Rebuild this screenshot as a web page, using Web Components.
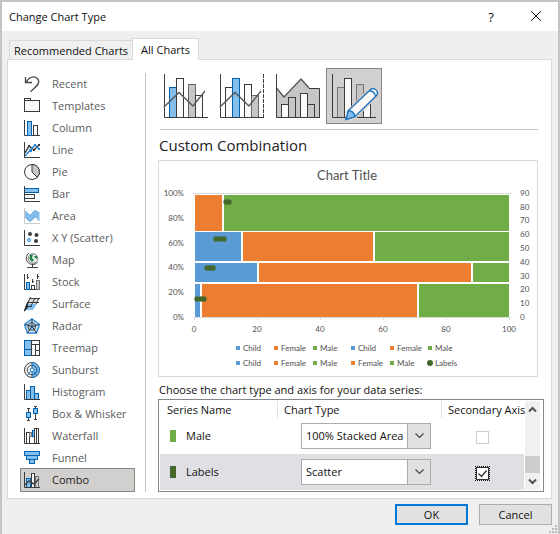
<!DOCTYPE html>
<html lang="en">
<head>
<meta charset="utf-8">
<title>Change Chart Type</title>
<style>
  body {
    margin: 0;
    font: 11px/16px "Open Sans", "Noto Sans", sans-serif;
    color: #111;
    background: #efefef;
  }
</style>
</head>
<body>
<chart-dialog heading="Change Chart Type">
  <dialog-tabs slot="tabs"></dialog-tabs>
  <chart-types slot="side"></chart-types>
  <combo-picker slot="main"></combo-picker>
  <h2 slot="main">Custom Combination</h2>
  <combo-preview slot="main"></combo-preview>
  <series-table slot="main"></series-table>
  <dialog-button slot="footer" primary>OK</dialog-button>
  <dialog-button slot="footer">Cancel</dialog-button>
</chart-dialog>

<script>
const Colors = {
  ink: '#3b3b3b',
  gray: '#c8c6c4',
  blue: '#83beec',
  blueDark: '#0063b1',
  child: '#5b9bd5',
  female: '#ed7d31',
  male: '#70ad47',
  labels: '#43682b',
};

const define = (name, html, setup) => {
  const template = document.createElement('template');
  template.innerHTML = html;
  customElements.define(name, class extends HTMLElement {
    constructor() {
      super();
      this.attachShadow({ mode: 'open' }).appendChild(template.content.cloneNode(true));
    }
    connectedCallback() {
      if (setup) setup(this, this.shadowRoot);
    }
  });
};

const bar = (x, y, w, h, fill = '#fafafa', stroke = Colors.ink) =>
  `<rect x="${x}" y="${y}" width="${w}" height="${h}" fill="${fill}" stroke="${stroke}"/>`;
const line = (d, stroke = Colors.ink, width = 1) =>
  `<path d="${d}" fill="none" stroke="${stroke}" stroke-width="${width}"/>`;
const blueBar = (x, y, w, h) => bar(x, y, w, h, Colors.blue, Colors.blueDark);
const axis = line('M.5 0V15.5H16');

// 16x16 icons of the category list
const typeIcons = {
  Recent: line('M1.5 1V6.5H8M2 6.5C4 2.5 6.5.8 9.5.8C12.5.8 14.7 3 14.7 5.5C14.7 8 13 10 11 11.5L6.5 15.7', '#444', 1.3),
  Templates: bar(.5, 2.5, 15, 11) + bar(.5, .5, 6, 2),
  Column: axis + blueBar(3.5, 1.5, 4, 14) + bar(9.5, 5.5, 4, 10),
  Line: line('M1 11L5 4L10 8L15 3', Colors.ink, 1.5) +
    line('M1 14L11 3L15 7', '#2b88d8', 1.5) + axis +
    `<path d="M4 3h2v2H4zM9 7h2v2H9zM14 2h2v2h-2z" fill="${Colors.ink}"/>` +
    '<path d="M10 2h2v2h-2zM14 6h2v2h-2zM5 7h3v3H5z" fill="#2b88d8"/>',
  Pie: `<circle cx="8" cy="8" r="7.5" fill="#fafafa" stroke="${Colors.ink}"/>
    <path d="M8 .5A7.5 7.5 0 0 1 13.3 13.3L8 8Z" fill="${Colors.gray}" stroke="${Colors.ink}"/>`,
  Bar: blueBar(.5, 2.5, 14, 4) + bar(.5, 8.5, 10, 4) + axis,
  Area: line('M.5 0V15.5H16', '#c8c8c8') +
    `<path d="M1 3L6 7L11 2L15.5 5V13L12 9L6 14L1 9Z" fill="${Colors.blue}"/>` +
    line('M1 3L6 7.5L11 2.5L15.5 5', '#69a8dc') + line('M1 9L6 13.5L11 8.5L15.5 13', '#69a8dc'),
  'X Y (Scatter)': axis + `<g fill="${Colors.ink}"><circle cx="6" cy="4" r="2"/><circle cx="12.5" cy="5" r="2"/><circle cx="12" cy="11" r="2"/></g>
    <circle cx="5" cy="10" r="1.5" fill="#cfe6f8" stroke="#2b88d8"/>`,
  Map: `<circle cx="9" cy="6.5" r="4.8" fill="#e9f2ec" stroke="#777"/>
    <path d="M6 3L9 2.5L8 6L10 8L8 10L5.5 7ZM10 4L13 4L13 7L11 6Z" fill="#20844a"/>` +
    line('M5 1C1.5 3 1.5 9 4.5 11C7 13 11 13 13.5 10.5M8.5 12V15M3 15.5H14', '#444'),
  Stock: line('M.5 0V15.5H16M3.5 0V5M3.5 3.5H5M8.5 5V9M8.5 7.5H10M13.5 0V5M13.5 2.5H15') +
    blueBar(2.5, 8.5, 3, 7) + bar(7.5, 11.5, 3, 4) + bar(12.5, 6.5, 3, 9, Colors.gray, '#777'),
  Surface: `<path d="M3 8L13 8L9 14H1Z" fill="${Colors.blue}"/><path d="M5 3H15L12 8H3Z" fill="#ddd"/>` +
    line('M5.5 2.5H16M3.5 6.5H15M2 10.5H8M6.5 1L1 13M11 2L6.5 11M15 2L12 8') +
    line('M0 15L4 10M4 6L2 11', '#222', 1.5),
  Radar: `<path d="M8 1L15.5 6.5L12.5 15H3.5L.5 6.5Z" fill="#d9ebf9" stroke="#2b88d8" stroke-width="1.5"/>
    <path d="M8 4L12 7L10.5 12H5L3.5 7Z" fill="#a8d0ef" stroke="#34495c"/>` +
    line('M8 1V8.5M15 6.5L8 8.5L12.5 15M3.5 15L8 8.5L1 6.5', '#333'),
  Treemap: blueBar(.5, .5, 7, 9) + blueBar(.5, 9.5, 7, 6) + bar(7.5, .5, 8, 4) + bar(7.5, 4.5, 4, 11) + bar(11.5, 4.5, 4, 6) + bar(11.5, 10.5, 4, 5),
  Sunburst: `<circle cx="8" cy="8" r="7.5" fill="#fafafa" stroke="${Colors.ink}"/>
    <path d="M8 .5A7.5 7.5 0 0 1 8 15.5Z" fill="${Colors.blue}" stroke="#1d6fb5"/>
    <circle cx="8" cy="8" r="4.8" fill="none" stroke="#444"/>
    <path d="M8 3.2A4.8 4.8 0 0 1 8 12.8M3 14L6 10M13 14L10 10" fill="none" stroke="#1d6fb5"/>
    <circle cx="8" cy="8" r="2" fill="#fff" stroke="#1d6fb5"/>`,
  Histogram: blueBar(2.5, 6.5, 4, 9) + blueBar(6.5, 2.5, 4, 13) + blueBar(10.5, 9.5, 4, 6) + axis,
  'Box & Whisker': line('M4.5 2V15M11.5 1V14M3 2.5H6M3 14.5H6M10 .5H13M10 13.5H13') +
    blueBar(2.5, 6.5, 4, 5) + blueBar(9.5, 2.5, 4, 5),
  Waterfall: axis + bar(2.5, 4.5, 3, 11) + bar(5.5, 4.5, 2, 4, Colors.gray, '#777') +
    blueBar(8.5, 2.5, 2, 6) + bar(10.5, .5, 2, 15) + bar(12.5, .5, 2, 15),
  Funnel: blueBar(.5, 1.5, 15, 4) + blueBar(2.5, 5.5, 11, 4) + blueBar(5.5, 9.5, 5, 4),
  Combo: bar(7.5, 1.5, 3, 14) + blueBar(2.5, 6.5, 4, 9) + bar(11.5, 4.5, 3, 11, Colors.gray, '#777') +
    axis + line('M1 13L5 9L10 12L15 7', '#444', 1.5),
};

// 56x56 pictures of the combo subtypes
const trend = line('M6 39L21 24.5L35 38L47 23', '#555', 1.3);
const bigAxis = line('M6.5 6V49.5H50');
const comboIcons = {
  'Clustered Column - Line': blueBar(11.5, 19.5, 7, 30) + bar(18.5, 10.5, 7, 39) +
    bar(30.5, 16.5, 7, 33, Colors.gray, '#666') + bar(37.5, 27.5, 7, 22) + bigAxis + trend,
  'Clustered Column - Line on Secondary Axis': bar(11.5, 19.5, 7, 30) + blueBar(18.5, 10.5, 7, 39) +
    bar(30.5, 16.5, 7, 33) + bar(37.5, 27.5, 7, 22, Colors.gray, '#666') + bigAxis + trend +
    `<path d="M49.5 6V49" stroke="${Colors.ink}" stroke-dasharray="4 1"/>`,
  'Stacked Area - Clustered Column': `<path d="M6.5 20L14 29L31 11L39 20H49.5V49.5H6.5Z" fill="${Colors.gray}"/>` +
    line('M6.5 20L14 29L31 11L39 20', '#555', 1.3) + line('M39 20.5H49.5V49.5') +
    bar(11.5, 36.5, 7, 13) + bar(18.5, 29.5, 7, 20, Colors.gray) +
    bar(30.5, 25.5, 7, 24) + bar(37.5, 36.5, 7, 13, Colors.gray) + bigAxis,
  'Custom Combination': bar(11.5, 19.5, 7, 30, '#c4c3c1', '#777') + bar(18.5, 10.5, 7, 39) +
    bar(30.5, 16.5, 7, 33, '#c4c3c1', '#777') + bar(37.5, 27.5, 7, 22) + bigAxis +
    `<path d="M23 44L45 22L50 27L28 49Z" fill="#d2d0ce" stroke="#d2d0ce" stroke-width="5"/>
    <path d="M20 51.5L22.5 42.5L44.5 21.5C48 18.5 53.5 23.5 50.5 27.5L29 48.5Z" fill="#fafafa" stroke="#1e73bd" stroke-width="1.3"/>
    <path d="M20 51.5L22.5 42.5C26 43 28.5 45.5 29 48.5Z" fill="${Colors.blue}" stroke="#1e73bd" stroke-width="1.3"/>
    <path d="M43.5 22.5C46.5 23 49 25.5 49.5 28.5" fill="none" stroke="#1e73bd" stroke-width="1.3"/>`,
};

define('chart-dialog', `
  <style>
    :host {
      display: flex;
      flex-direction: column;
      box-sizing: border-box;
      min-height: 100vh;
      border: 2px solid #c3c3c3;
      background: #efefef;
    }
    header {
      display: flex;
      align-items: center;
      height: 29px;
      padding: 0 7px;
      background: #fff;
    }
    h1 {
      flex: 1;
      margin: 0;
      font-size: 11px;
      font-weight: 400;
    }
    header button {
      width: 30px;
      height: 24px;
      padding: 0;
      border: 0;
      background: none;
      font: inherit;
      font-size: 13px;
      color: #111;
    }
    header button:last-child {
      margin-left: 15px;
    }
    nav {
      padding: 7px 5px 0;
    }
    .panel {
      display: flex;
      gap: 12px;
      margin: 0 6px 0 5px;
      padding: 13px 7px 6px 13px;
      border: 1px solid #d9d9d9;
      background: #fff;
    }
    .main {
      flex: 1;
      min-width: 0;
    }
    ::slotted(h2) {
      margin: 5px 0 5px 1px;
      font-size: 15px;
      line-height: 20px;
      font-weight: 400;
      color: #222;
    }
    footer {
      display: flex;
      justify-content: flex-end;
      gap: 11px;
      padding: 5px 6px 0;
    }
    .grip {
      display: block;
      width: 9px;
      margin: auto 0 0 auto;
    }
  </style>
  <header>
    <h1></h1>
    <button aria-label="Help">?</button>
    <button aria-label="Close"><svg width="12" height="12" viewBox="0 0 12 12"><path d="M1 1L11 11M11 1L1 11" stroke="#111"/></svg></button>
  </header>
  <nav><slot name="tabs"></slot></nav>
  <div class="panel">
    <slot name="side"></slot>
    <div class="main"><slot name="main"></slot></div>
  </div>
  <footer><slot name="footer"></slot></footer>
  <svg class="grip" viewBox="0 0 9 9" fill="#b8b8b8"><path d="M6 0h2v2h-2zM3 3h2v2h-2zM6 3h2v2h-2zM0 6h2v2h-2zM3 6h2v2h-2zM6 6h2v2h-2z"/></svg>
`, (host, root) => {
  root.querySelector('h1').textContent = host.getAttribute('heading');
});

define('dialog-tabs', `
  <style>
    :host {
      display: flex;
      align-items: flex-end;
      padding-left: 2px;
    }
    button {
      height: 19px;
      padding: 2px 4px 0;
      border: 1px solid #d9d9d9;
      border-bottom: 0;
      background: #f0f0f0;
      font: inherit;
      color: #111;
    }
    button[aria-selected=true] {
      position: relative;
      height: 22px;
      padding: 0 8px;
      margin: 0 0 -1px -1px;
      background: #fff;
    }
  </style>
  <button role="tab" aria-selected="false">Recommended Charts</button>
  <button role="tab" aria-selected="true">All Charts</button>
`);

define('chart-types', `
  <style>
    :host {
      display: block;
      padding-right: 11px;
      border-right: 1px solid #c6c6c6;
    }
    button {
      display: flex;
      align-items: center;
      gap: 12px;
      width: 113px;
      height: 22px;
      padding: 0 0 0 3px;
      border: 0;
      background: none;
      font: inherit;
      white-space: nowrap;
      color: #5c5c5c;
    }
    button[aria-current] {
      outline: 1px solid #858a80;
      background: #d2d0ce;
      color: #222;
    }
    svg {
      flex: none;
    }
  </style>
`, (host, root) => {
  Object.entries(typeIcons).forEach(([name, icon]) => {
    const button = document.createElement('button');
    button.innerHTML = `<svg width="16" height="16" viewBox="0 0 16 16">${icon}</svg><span></span>`;
    button.querySelector('span').textContent = name;
    if (name === 'Combo') button.setAttribute('aria-current', 'true');
    root.appendChild(button);
  });
});

define('combo-picker', `
  <style>
    :host {
      display: flex;
      margin: -5px 6px 0 2px;
      padding-bottom: 5px;
      border-bottom: 1px solid #c6c6c6;
    }
    button {
      width: 56px;
      height: 56px;
      padding: 0;
      border: 0;
      background: none;
    }
    button:first-of-type {
      margin-left: -2px;
    }
    button[aria-pressed=true] {
      box-shadow: inset 0 0 0 1px #8a8886;
      background: #d2d0ce;
    }
    svg {
      display: block;
    }
  </style>
`, (host, root) => {
  Object.entries(comboIcons).forEach(([name, icon]) => {
    const button = document.createElement('button');
    button.setAttribute('aria-label', name);
    button.setAttribute('aria-pressed', name === 'Custom Combination');
    button.innerHTML = `<svg width="56" height="56" viewBox="0 0 56 56">${icon}</svg>`;
    root.appendChild(button);
  });
});

const rows = [
  { y: 34, h: 36, cells: [['female', 36, 63], ['male', 65, 350]], dots: [67, 70], dotY: 41 },
  { y: 71, h: 29, cells: [['child', 36, 82], ['female', 84, 214], ['male', 216, 350]], dots: [57, 61, 65], dotY: 78 },
  { y: 102, h: 19, cells: [['child', 36, 98], ['female', 100, 312], ['male', 314, 350]], dots: [48, 51, 54], dotY: 107 },
  { y: 123, h: 33, cells: [['child', 36, 41], ['female', 43, 258], ['male', 260, 350]], dots: [38, 42, 45], dotY: 138 },
];
const legend = [
  [['child', 77], ['female', 115], ['male', 154], ['child', 192], ['female', 231], ['male', 269]],
  [['child', 77], ['female', 115], ['male', 154], ['female', 192], ['male', 231], ['labels', 269]],
];

define('combo-preview', `
  <style>
    :host {
      display: block;
      margin-right: 6px;
      border: 1px solid #d9d9d9;
      background: #fff;
    }
    svg {
      display: block;
      width: 100%;
      font: 8px Lato, sans-serif;
    }
  </style>
  <svg viewBox="0 0 378 215" fill="#505050" role="img" aria-label="Combination chart preview"></svg>
`, (host, root) => {
  const text = (x, y, value, anchor = 'start') => `<text x="${x}" y="${y}" text-anchor="${anchor}">${value}</text>`;
  let out = '<text x="188" y="19" text-anchor="middle" font-size="13">Chart Title</text>';
  out += '<path d="M34 32.5H352M34 156.5H352" stroke="#d9d9d9"/>';
  for (let n = 0; n <= 100; n += 20) {
    const x = Math.round(35 + n * 3.15);
    out += text(25, Math.round(156 - n * 1.24) + 3, `${n}%`, 'end') + text(x, 171, n, 'middle');
    out += `<path d="M${x}.5 157v2" stroke="#d9d9d9"/>`;
  }
  for (let n = 0; n <= 90; n += 10) out += text(361, Math.round(156 - n * 1.38) + 3, n);
  rows.forEach(({ y, h, cells, dots, dotY }) => {
    cells.forEach(([kind, from, to]) => {
      out += `<rect x="${from}" y="${y}" width="${to - from}" height="${h}" fill="${Colors[kind]}"/>`;
    });
    dots.forEach((x) => {
      out += `<circle cx="${x}" cy="${dotY}" r="2.7" fill="${Colors.labels}"/>`;
    });
  });
  legend.forEach((items, i) => {
    const y = 187 + i * 15;
    items.forEach(([kind, x]) => {
      const name = kind[0].toUpperCase() + kind.slice(1);
      out += kind === 'labels'
        ? `<circle cx="${x + 2}" cy="${y}" r="3" fill="${Colors.labels}"/>`
        : `<rect x="${x}" y="${y - 2}" width="4" height="4" fill="${Colors[kind]}"/>`;
      out += text(x + 7, y + 3, name);
    });
  });
  root.querySelector('svg').innerHTML = out;
});

define('type-select', `
  <style>
    :host {
      display: flex;
      position: relative;
      width: 130px;
      height: 26px;
    }
    select {
      flex: 1;
      min-width: 0;
      appearance: none;
      margin: 0;
      padding: 0 24px 0 4px;
      border: 1px solid #ababab;
      border-radius: 0;
      background: linear-gradient(#ababab, #ababab) 105px 0 / 1px 100% no-repeat, linear-gradient(90deg, #fff 105px, #e1e1e1 105px);
      font: inherit;
      color: #111;
    }
    svg {
      position: absolute;
      right: 7px;
      top: 10px;
      pointer-events: none;
    }
  </style>
  <select aria-label="Chart Type"><option></option></select>
  <svg width="9" height="6" viewBox="0 0 9 6"><path d="M.5 .5L4.5 4.5L8.5 .5" fill="none" stroke="#444" stroke-width="1.2"/></svg>
`, (host, root) => {
  root.querySelector('option').textContent = host.getAttribute('value');
});

define('series-table', `
  <style>
    :host {
      display: block;
    }
    p {
      margin: 5px 0 1px 1px;
    }
    .list {
      display: flex;
      border: 1px solid #828790;
      padding: 1px;
    }
    table {
      flex: 1;
      width: 100%;
      min-width: 0;
      table-layout: fixed;
      border-collapse: collapse;
    }
    th {
      height: 17px;
      padding: 0 0 0 7px;
      font-weight: 400;
      line-height: 14px;
      text-align: left;
      white-space: nowrap;
    }
    th + th {
      box-shadow: inset 1px 0 #e1e1e1;
    }
    td {
      height: 36px;
      padding: 0;
    }
    tr.selected td {
      background: #e0dfe4;
    }
    .name {
      display: flex;
      align-items: center;
      gap: 10px;
      padding-left: 10px;
    }
    .key {
      width: 6px;
      height: 12px;
    }
    type-select {
      margin-left: 24px;
    }
    td:last-child {
      text-align: center;
    }
    input {
      appearance: none;
      display: inline-block;
      width: 13px;
      height: 13px;
      margin: 0;
      border: 1px solid #ccc;
      background: #fff;
      vertical-align: middle;
    }
    input:checked {
      border-color: #333;
      outline: 1px dotted #111;
      background: #fff url('data:image/svg+xml,<svg xmlns="http://www.w3.org/2000/svg" viewBox="0 0 11 11"><path d="M1.5 5.5L4.5 8.5L9.5 2.5" fill="none" stroke="%23333" stroke-width="1.3"/></svg>');
    }
    .bar {
      display: flex;
      flex: none;
      flex-direction: column;
      width: 15px;
      margin: 0 2px 0 1px;
      background: #f0f0f0;
    }
    .bar button {
      height: 17px;
      padding: 0;
      border: 0;
      background: none;
      line-height: 0;
    }
    .thumb {
      height: 17px;
      margin-top: auto;
      background: #cdcdcd;
    }
  </style>
  <p id="caption">Choose the chart type and axis for your data series:</p>
  <div class="list">
    <table aria-labelledby="caption">
      <colgroup><col style="width: 117px"><col><col style="width: 83px"></colgroup>
      <thead><tr><th>Series Name</th><th>Chart Type</th><th>Secondary Axis</th></tr></thead>
      <tbody>
        <tr>
          <td><span class="name"><i class="key" style="background: #70ad47"></i>Male</span></td>
          <td><type-select value="100% Stacked Area"></type-select></td>
          <td><input type="checkbox" aria-label="Male on secondary axis"></td>
        </tr>
        <tr class="selected">
          <td><span class="name"><i class="key" style="background: #43682b"></i>Labels</span></td>
          <td><type-select value="Scatter"></type-select></td>
          <td><input type="checkbox" aria-label="Labels on secondary axis" checked></td>
        </tr>
      </tbody>
    </table>
    <div class="bar">
      <button aria-label="Scroll up"><svg width="9" height="7" viewBox="0 0 9 7"><path d="M1 5.5L4.5 2L8 5.5" fill="none" stroke="#505050" stroke-width="2"/></svg></button>
      <div class="thumb"></div>
      <button aria-label="Scroll down"><svg width="9" height="7" viewBox="0 0 9 7"><path d="M1 1.5L4.5 5L8 1.5" fill="none" stroke="#505050" stroke-width="2"/></svg></button>
    </div>
  </div>
`);

define('dialog-button', `
  <style>
    :host {
      display: block;
    }
    button {
      display: block;
      width: 73px;
      height: 21px;
      padding: 0;
      border: 1px solid #adadad;
      background: #e1e1e1;
      font: inherit;
      color: #111;
    }
    :host([primary]) button {
      border: 2px solid #0078d7;
    }
  </style>
  <button><slot></slot></button>
`);
</script>
</body>
</html>
